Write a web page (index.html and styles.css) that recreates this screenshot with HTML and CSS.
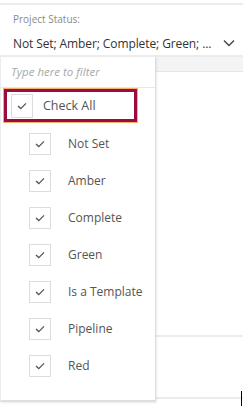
FILE: index.html
```html
<!DOCTYPE html>
<html>
<head>
<meta charset="utf-8">
<link rel="stylesheet" href="styles.css">
</head>
<body>
<div class="page">
  <div class="field">
    <div class="label">Project Status:</div>
    <div class="value-row">
      <span class="value">Not Set; Amber; Complete; Green; ...</span>
      <svg class="chev" width="12" height="8" viewBox="0 0 12 8"><path d="M1 1.5 L6 6.5 L11 1.5" fill="none" stroke="#444" stroke-width="1.4"/></svg>
    </div>
  </div>
  <div class="lower">
    <div class="panel">
      <div class="filter">Type here to filter</div>
      <div class="check-all">
        <span class="box"><svg width="10" height="8" viewBox="0 0 10 8"><path d="M1 4 L3.8 6.6 L9 1.4" fill="none" stroke="#555" stroke-width="1.3"/></svg></span>
        <span class="txt">Check All</span>
      </div>
      <ul class="items">
        <li><span class="box"><svg width="10" height="8" viewBox="0 0 10 8"><path d="M1 4 L3.8 6.6 L9 1.4" fill="none" stroke="#555" stroke-width="1.3"/></svg></span><span class="txt">Not Set</span></li>
        <li><span class="box"><svg width="10" height="8" viewBox="0 0 10 8"><path d="M1 4 L3.8 6.6 L9 1.4" fill="none" stroke="#555" stroke-width="1.3"/></svg></span><span class="txt">Amber</span></li>
        <li><span class="box"><svg width="10" height="8" viewBox="0 0 10 8"><path d="M1 4 L3.8 6.6 L9 1.4" fill="none" stroke="#555" stroke-width="1.3"/></svg></span><span class="txt">Complete</span></li>
        <li><span class="box"><svg width="10" height="8" viewBox="0 0 10 8"><path d="M1 4 L3.8 6.6 L9 1.4" fill="none" stroke="#555" stroke-width="1.3"/></svg></span><span class="txt">Green</span></li>
        <li><span class="box"><svg width="10" height="8" viewBox="0 0 10 8"><path d="M1 4 L3.8 6.6 L9 1.4" fill="none" stroke="#555" stroke-width="1.3"/></svg></span><span class="txt">Is a Template</span></li>
        <li><span class="box"><svg width="10" height="8" viewBox="0 0 10 8"><path d="M1 4 L3.8 6.6 L9 1.4" fill="none" stroke="#555" stroke-width="1.3"/></svg></span><span class="txt">Pipeline</span></li>
        <li><span class="box"><svg width="10" height="8" viewBox="0 0 10 8"><path d="M1 4 L3.8 6.6 L9 1.4" fill="none" stroke="#555" stroke-width="1.3"/></svg></span><span class="txt">Red</span></li>
      </ul>
    </div>
    <div class="side">
      <div class="band"></div>
      <div class="gap1"></div>
      <div class="gap2"></div>
    </div>
    <div class="caret"></div>
  </div>
</div>
</body>
</html>
```
FILE: styles.css
```css
html, body {
  margin: 0;
  padding: 0;
  background: #fff;
}
body {
  font-family: "Open Sans", "Noto Sans", sans-serif;
  width: 245px;
  height: 406px;
  overflow: hidden;
}
.page {
  padding-top: 3px;
  width: 243px;
}
.field {
  border-top: 2px solid #ececec;
  border-bottom: 2px solid #ececec;
  height: 50px;
  padding-left: 13px;
  box-sizing: content-box;
}
.label {
  font-size: 10px;
  color: #8a8a8a;
  line-height: 14px;
  padding-top: 7px;
}
.value-row {
  display: flex;
  align-items: center;
  height: 20px;
  margin-top: 7px;
}
.value {
  font-size: 12px;
  color: #333;
  letter-spacing: -0.1px;
}
.chev {
  margin-left: auto;
  margin-right: 8px;
}
.lower {
  position: relative;
  display: flex;
  height: 350px;
}
.panel {
  width: 154px;
  height: 343px;
  border-left: 1px solid #ececec;
  border-right: 1px solid #dedede;
  border-bottom: 2px solid #dedede;
  box-shadow: 1px 1px 2px rgba(0,0,0,0.08);
  background: #fff;
  position: relative;
  z-index: 1;
}
.filter {
  height: 30px;
  line-height: 30px;
  padding-left: 10px;
  font-size: 11.5px;
  font-style: italic;
  color: #a8a8a8;
  border-bottom: 1px solid #e8e8e8;
}
.check-all {
  margin: 1px 0 0 3px;
  width: 127px;
  height: 27px;
  border: 3px solid #9b0c40;
  box-shadow: 0 0 0 1px #f0b070;
  display: flex;
  align-items: center;
}
.box {
  width: 20px;
  height: 20px;
  border: 1px solid #dcdcdc;
  display: flex;
  align-items: center;
  justify-content: center;
  flex: none;
}
.check-all .box {
  margin-left: 4px;
  height: 22px;
}
.check-all .txt {
  margin-left: 10px;
  font-size: 12.5px;
  color: #555;
}
.items {
  list-style: none;
  margin: 3px 0 0 0;
  padding: 0 0 0 28px;
}
.items li {
  display: flex;
  align-items: center;
  height: 37px;
}
.items .txt {
  margin-left: 17px;
  font-size: 12px;
  color: #555;
}
.side {
  flex: 1;
}
.band {
  height: 14px;
  background: #f3f5f5;
  border-bottom: 1px solid #e6e6e6;
}
.gap1 {
  height: 263px;
  border-bottom: 2px solid #ececec;
}
.gap2 {
  height: 60px;
  border-bottom: 2px solid #ececec;
}
.caret {
  position: absolute;
  left: 241px;
  top: 334px;
  width: 1px;
  height: 20px;
  background: #000;
}
```
